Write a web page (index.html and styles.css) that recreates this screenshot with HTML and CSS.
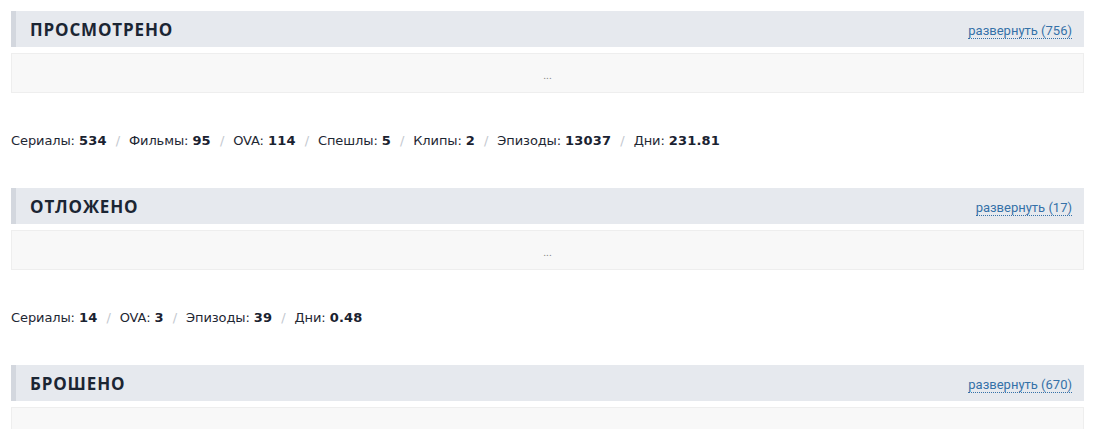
FILE: index.html
```html
<!DOCTYPE html>
<html lang="ru">
<head>
<meta charset="utf-8">
<title>Списки</title>
<link rel="stylesheet" href="styles.css">
</head>
<body>
<section class="block">
  <div class="block-head">
    <h2 class="block-title">Просмотрено</h2>
    <a class="expand" href="#">развернуть (756)</a>
  </div>
  <div class="block-body">...</div>
  <p class="stats">Сериалы: <b>534</b><span class="sep">/</span>Фильмы: <b>95</b><span class="sep">/</span>OVA: <b>114</b><span class="sep">/</span>Спешлы: <b>5</b><span class="sep">/</span>Клипы: <b>2</b><span class="sep">/</span>Эпизоды: <b>13037</b><span class="sep">/</span>Дни: <b>231.81</b></p>
</section>
<section class="block">
  <div class="block-head">
    <h2 class="block-title">Отложено</h2>
    <a class="expand" href="#">развернуть (17)</a>
  </div>
  <div class="block-body">...</div>
  <p class="stats">Сериалы: <b>14</b><span class="sep">/</span>OVA: <b>3</b><span class="sep">/</span>Эпизоды: <b>39</b><span class="sep">/</span>Дни: <b>0.48</b></p>
</section>
<section class="block">
  <div class="block-head">
    <h2 class="block-title">Брошено</h2>
    <a class="expand" href="#">развернуть (670)</a>
  </div>
  <div class="block-body">...</div>
</section>
</body>
</html>
```
FILE: styles.css
```css
html, body {
  margin: 0;
  padding: 0;
  background: #ffffff;
}
body {
  padding: 11px 17px 0 11px;
  font-family: "DejaVu Sans", Verdana, sans-serif;
}
.block {
  margin-bottom: 39px;
}
.block + .block + .block {
  margin-top: 1px;
}
.block-head {
  display: flex;
  align-items: center;
  justify-content: space-between;
  height: 36px;
  box-sizing: border-box;
  background: #e6e9ee;
  border-left: 5px solid #d3d7de;
  padding: 0 12px 0 14px;
}
.block-title {
  margin: 0;
  font-family: "Open Sans", sans-serif;
  font-weight: 700;
  font-size: 17px;
  letter-spacing: 0.85px;
  text-transform: uppercase;
  color: #1b2533;
}
.expand {
  font-family: Roboto, Arial, sans-serif;
  font-size: 13px;
  color: #3571a8;
  text-decoration: none;
  border-bottom: 1px dotted #3571a8;
  line-height: 14px;
  margin-top: 4px;
}
.block-body {
  margin-top: 6px;
  height: 40px;
  box-sizing: border-box;
  background: #f8f8f8;
  border: 1px solid #eeeeee;
  display: flex;
  align-items: center;
  justify-content: center;
  font-family: Roboto, Arial, sans-serif;
  font-size: 11px;
  color: #888;
  padding-top: 4px;
}
.stats {
  margin: 40px 0 0 0;
  font-size: 13px;
  line-height: 16px;
  color: #1e2733;
  letter-spacing: -0.1px;
}
.stats b {
  font-weight: 700;
  color: #1a2230;
  letter-spacing: 0.2px;
}
.sep {
  color: #c3c8cf;
  margin: 0 9px;
}
```
